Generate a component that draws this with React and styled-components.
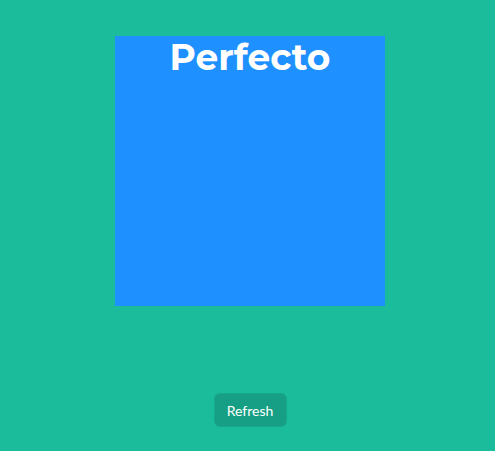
import styled, { createGlobalStyle } from "styled-components"

const GlobalStyle = createGlobalStyle`
  html, body {
    margin: 0;
    padding: 0;
    background: #1abc9c;
    height: 100%;
  }
  #root {
    min-height: 451px;
  }
`

const Page = styled.div`
  display: flex;
  flex-direction: column;
  align-items: center;
  padding: 36px 0 0 5px;
  min-height: 451px;
  box-sizing: border-box;
`

const Square = styled.div`
  width: 270px;
  height: 270px;
  background: #1e90ff;
  display: flex;
  justify-content: center;
  align-items: flex-start;
`

const Title = styled.h1`
  margin: 0;
  color: #fff;
  font-family: "Montserrat", "Inter", "DejaVu Sans", sans-serif;
  font-weight: 700;
  font-size: 36px;
  line-height: 42px;
`

const Button = styled.button`
  margin-top: 87px;
  padding: 0;
  width: 73px;
  height: 34px;
  border: 1px solid #17a88b;
  border-radius: 6px;
  background: #179f85;
  color: #fff;
  font-family: "Lato", "Liberation Sans", sans-serif;
  font-weight: 400;
  font-size: 14px;
  cursor: pointer;
`

const App = () => {
  return (
    <>
      <GlobalStyle />
      <Page>
        <Square>
          <Title>Perfecto</Title>
        </Square>
        <Button>Refresh</Button>
      </Page>
    </>
  )
}

export default App
